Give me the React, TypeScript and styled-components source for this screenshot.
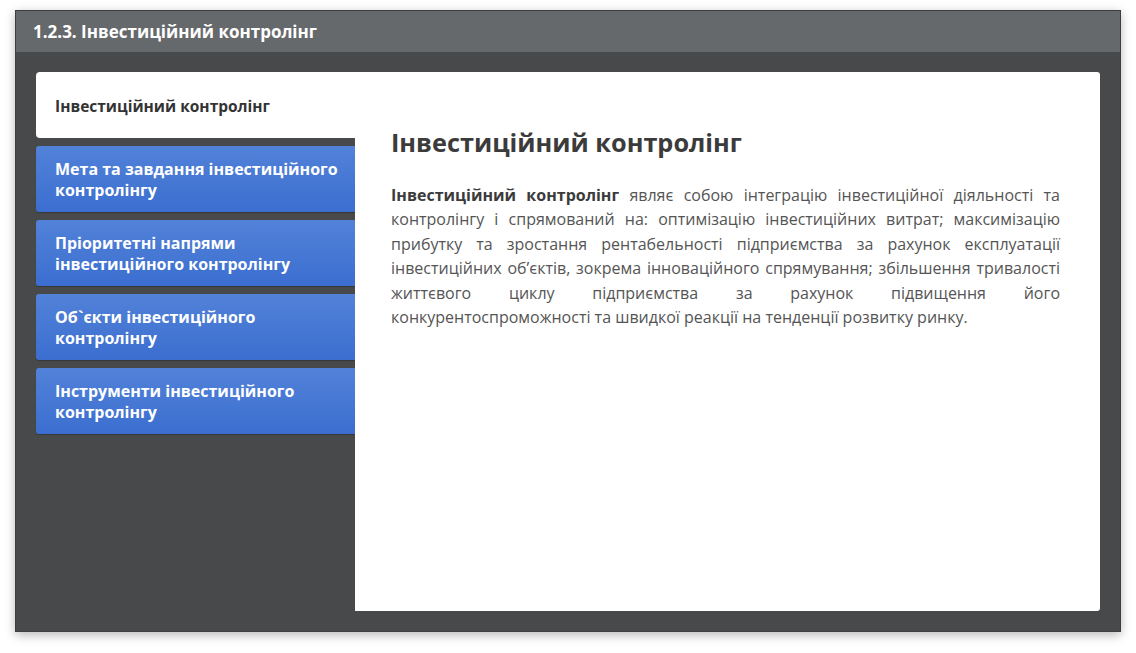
import React from "react";
import styled, { createGlobalStyle } from "styled-components";

const Global = createGlobalStyle`
  html, body { margin: 0; padding: 0; background: #ffffff; }
  body { font-family: "Open Sans", "Noto Sans", sans-serif; }
  * { box-sizing: border-box; }
`;

const Page = styled.div`
  width: 1136px;
  height: 653px;
  padding: 10px 15px 0 15px;
`;

const Window = styled.div`
  width: 1106px;
  height: 622px;
  display: flex;
  flex-direction: column;
  background: #48494b;
  border: 1px solid #3d3e40;
  box-shadow: 0 3px 10px rgba(0, 0, 0, 0.28);
`;

const TitleBar = styled.div`
  height: 41px;
  flex: none;
  display: flex;
  align-items: center;
  padding-left: 17px;
  background: #66696c;
  color: #ffffff;
  font-size: 17px;
  font-weight: 700;
`;

const Body = styled.div`
  flex: 1;
  display: flex;
  padding: 20px 20px 20px 20px;
  min-height: 0;
`;

const TabList = styled.div`
  width: 319px;
  flex: none;
  display: flex;
  flex-direction: column;
  gap: 8px;
`;

const Tab = styled.div<{ $active?: boolean }>`
  height: 66px;
  display: flex;
  align-items: center;
  padding: 2px 12px 0 19px;
  border-radius: ${(p) => (p.$active ? "4px 0 0 4px" : "3px 0 0 3px")};
  font-weight: 700;
  line-height: 21px;
  font-size: ${(p) => (p.$active ? "15.5px" : "16px")};
  color: ${(p) => (p.$active ? "#333333" : "#ffffff")};
  background: ${(p) =>
    p.$active ? "#ffffff" : "linear-gradient(to bottom, #5282d8, #3b6ed0)"};
  box-shadow: ${(p) => (p.$active ? "none" : "0 1px 1px rgba(0,0,0,0.25)")};
`;

const Panel = styled.div`
  flex: 1;
  background: #ffffff;
  border-radius: 0 3px 3px 0;
  padding: 52px 40px 0 36px;
`;

const Heading = styled.h1`
  margin: 0 0 23px 0;
  font-size: 25.3px;
  line-height: 36px;
  font-weight: 700;
  color: #3b3b3b;
`;

const Paragraph = styled.p`
  margin: 0;
  font-size: 16px;
  line-height: 24.4px;
  color: #555555;
  text-align: justify;

  strong {
    color: #3b3b3b;
    font-weight: 700;
  }
`;

export default function App() {
  return (
    <>
      <Global />
      <Page>
        <Window>
          <TitleBar>1.2.3. Інвестиційний контролінг</TitleBar>
          <Body>
            <TabList>
              <Tab $active>Інвестиційний контролінг</Tab>
              <Tab>Мета та завдання інвестиційного контролінгу</Tab>
              <Tab>
                Пріоритетні напрями
                <br />
                інвестиційного контролінгу
              </Tab>
              <Tab>
                Об`єкти інвестиційного
                <br />
                контролінгу
              </Tab>
              <Tab>
                Інструменти інвестиційного
                <br />
                контролінгу
              </Tab>
            </TabList>
            <Panel>
              <Heading>Інвестиційний контролінг</Heading>
              <Paragraph>
                <strong>Інвестиційний контролінг</strong> являє собою інтеграцію
                інвестиційної діяльності та контролінгу і спрямований на:
                оптимізацію інвестиційних витрат; максимізацію прибутку та
                зростання рентабельності підприємства за рахунок експлуатації
                інвестиційних об’єктів, зокрема інноваційного спрямування;
                збільшення тривалості життєвого циклу підприємства за рахунок
                підвищення його конкурентоспроможності та швидкої реакції на
                тенденції розвитку ринку.
              </Paragraph>
            </Panel>
          </Body>
        </Window>
      </Page>
    </>
  );
}
